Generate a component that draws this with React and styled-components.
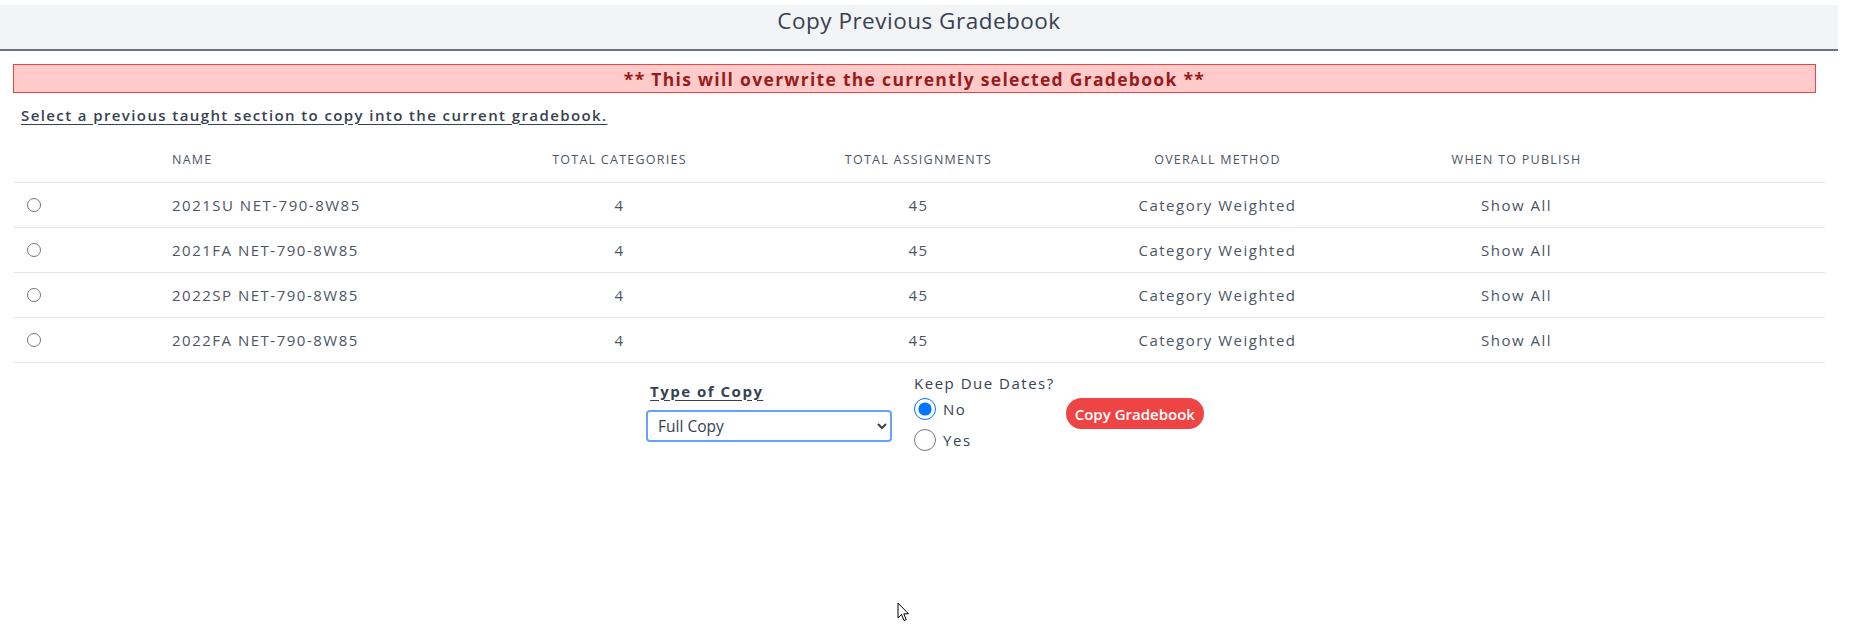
import React, { useState } from "react";
import styled, { createGlobalStyle } from "styled-components";

const GlobalStyle = createGlobalStyle`
  html, body {
    margin: 0;
    padding: 0;
    background: #ffffff;
    font-family: "Open Sans", "Noto Sans", sans-serif;
    color: #374151;
  }
`;

const Page = styled.div`
  position: relative;
  width: 1838px;
  min-height: 625px;
  padding-top: 5px;
  box-sizing: border-box;
`;

const Header = styled.div`
  height: 44px;
  box-sizing: border-box;
  padding-bottom: 12px;
  background: #f3f4f6;
  border-bottom: 2px solid #6b7280;
  display: flex;
  align-items: center;
  justify-content: center;
  box-sizing: content-box;
  height: 32px;
`;

const Title = styled.h1`
  margin: 0;
  font-size: 22.5px;
  line-height: 30px;
  font-weight: 400;
  letter-spacing: 0.5px;
  color: #374151;
`;

const Content = styled.div`
  margin: 0 13px;
`;

const Warning = styled.div`
  margin: 13px 9px 0 0;
  height: 29px;
  box-sizing: border-box;
  background: #fecaca;
  border: 1px solid #ef4444;
  display: flex;
  align-items: center;
  justify-content: center;
  font-size: 17.5px;
  font-weight: 700;
  letter-spacing: 1.3px;
  color: #991b1b;
`;

const Instructions = styled.p`
  margin: 11px 0 0;
  padding-left: 8px;
  line-height: 22px;
  font-size: 15px;
  font-weight: 600;
  letter-spacing: 1.4px;
  text-decoration: underline;
  text-underline-offset: 3px;
  color: #374151;
`;

const Table = styled.div`
  margin-top: 10px;
`;

const Row = styled.div`
  display: grid;
  grid-template-columns: 143px 314px repeat(4, 299px) 1fr;
  align-items: center;
  height: ${(p) => (p.$head ? "46px" : "44px")};
  border-bottom: 1px solid #e5e7eb;
`;

const HeadCell = styled.div`
  font-size: 12.5px;
  letter-spacing: 1.25px;
  text-transform: uppercase;
  color: #4b5563;
  text-align: ${(p) => (p.$left ? "left" : "center")};
  padding-left: ${(p) => (p.$left ? "16px" : "0")};
`;

const Cell = styled.div`
  font-size: 15px;
  letter-spacing: 1.5px;
  color: #4b5563;
  text-align: ${(p) => (p.$left ? "left" : "center")};
  padding-left: ${(p) => (p.$left ? "16px" : "0")};
`;

const RowRadio = styled.input`
  width: 14px;
  height: 14px;
  margin: 0 0 0 14px;
  display: block;
`;

const Controls = styled.div`
  display: flex;
  justify-content: center;
  align-items: flex-start;
  margin-top: 10px;
  padding-left: 12px;
`;

const CopyType = styled.div`
  width: 246px;
  padding-top: 7px;
  display: flex;
  flex-direction: column;
`;

const FieldLabel = styled.label`
  line-height: ${(p) => (p.$bold ? "22px" : "20px")};
  font-size: 15px;
  letter-spacing: 1.5px;
  color: #374151;
  font-weight: ${(p) => (p.$bold ? 700 : 400)};
  text-decoration: ${(p) => (p.$bold ? "underline" : "none")};
  text-underline-offset: 3px;
  padding-left: ${(p) => (p.$bold ? "4px" : "0")};
`;

const Select = styled.select`
  margin-top: 8px;
  width: 246px;
  height: 32px;
  box-sizing: border-box;
  border: 2px solid #60a5fa;
  border-radius: 4px;
  padding: 0 6px;
  font-family: "Open Sans", sans-serif;
  font-size: 15.5px;
  color: #374151;
  background: #fff;
  outline: none;
`;

const DueDates = styled.div`
  margin-left: 22px;
  display: flex;
  flex-direction: column;
`;

const Choice = styled.label`
  display: flex;
  align-items: center;
  gap: 7px;
  height: 31px;
  font-size: 15px;
  letter-spacing: 1.5px;
  color: #374151;
`;

const BigRadio = styled.input`
  width: 22px;
  height: 22px;
  margin: 0;
`;

const CopyButton = styled.button`
  margin: 25px 0 0 11px;
  height: 31px;
  padding: 0 9px;
  border: none;
  border-radius: 16px;
  background: #ef4444;
  color: #ffffff;
  font-family: "Open Sans", sans-serif;
  font-size: 15px;
  font-weight: 600;
  cursor: pointer;
`;

const Pointer = styled.svg`
  position: absolute;
  left: 897px;
  top: 602px;
`;

const sections = [
  "2021SU NET-790-8W85",
  "2021FA NET-790-8W85",
  "2022SP NET-790-8W85",
  "2022FA NET-790-8W85",
];

export default function App() {
  const [picked, setPicked] = useState(null);
  const [keepDates, setKeepDates] = useState("no");

  return (
    <>
      <GlobalStyle />
      <Page>
        <Header>
          <Title>Copy Previous Gradebook</Title>
        </Header>
        <Content>
          <Warning>** This will overwrite the currently selected Gradebook **</Warning>
          <Instructions>Select a previous taught section to copy into the current gradebook.</Instructions>

          <Table>
            <Row $head>
              <div />
              <HeadCell $left>Name</HeadCell>
              <HeadCell>Total Categories</HeadCell>
              <HeadCell>Total Assignments</HeadCell>
              <HeadCell>Overall Method</HeadCell>
              <HeadCell>When to Publish</HeadCell>
              <div />
            </Row>
            {sections.map((name) => (
              <Row key={name}>
                <RowRadio
                  type="radio"
                  name="section"
                  checked={picked === name}
                  onChange={() => setPicked(name)}
                />
                <Cell $left>{name}</Cell>
                <Cell>4</Cell>
                <Cell>45</Cell>
                <Cell>Category Weighted</Cell>
                <Cell>Show All</Cell>
                <div />
              </Row>
            ))}
          </Table>

          <Controls>
            <CopyType>
              <FieldLabel $bold>Type of Copy</FieldLabel>
              <Select defaultValue="full">
                <option value="full">Full Copy</option>
                <option value="categories">Categories Only</option>
              </Select>
            </CopyType>
            <DueDates>
              <FieldLabel>Keep Due Dates?</FieldLabel>
              <Choice>
                <BigRadio
                  type="radio"
                  name="keep"
                  checked={keepDates === "no"}
                  onChange={() => setKeepDates("no")}
                />
                No
              </Choice>
              <Choice>
                <BigRadio
                  type="radio"
                  name="keep"
                  checked={keepDates === "yes"}
                  onChange={() => setKeepDates("yes")}
                />
                Yes
              </Choice>
            </DueDates>
            <CopyButton>Copy Gradebook</CopyButton>
          </Controls>
        </Content>

        <Pointer width="13" height="21" viewBox="0 0 13 21">
          <path
            d="M1 1 L1 16 L4.5 12.5 L7 18.5 L9.2 17.6 L6.8 11.8 L11.5 11.8 Z"
            fill="#ffffff"
            stroke="#000000"
            strokeWidth="1"
            strokeLinejoin="round"
          />
        </Pointer>
      </Page>
    </>
  );
}
